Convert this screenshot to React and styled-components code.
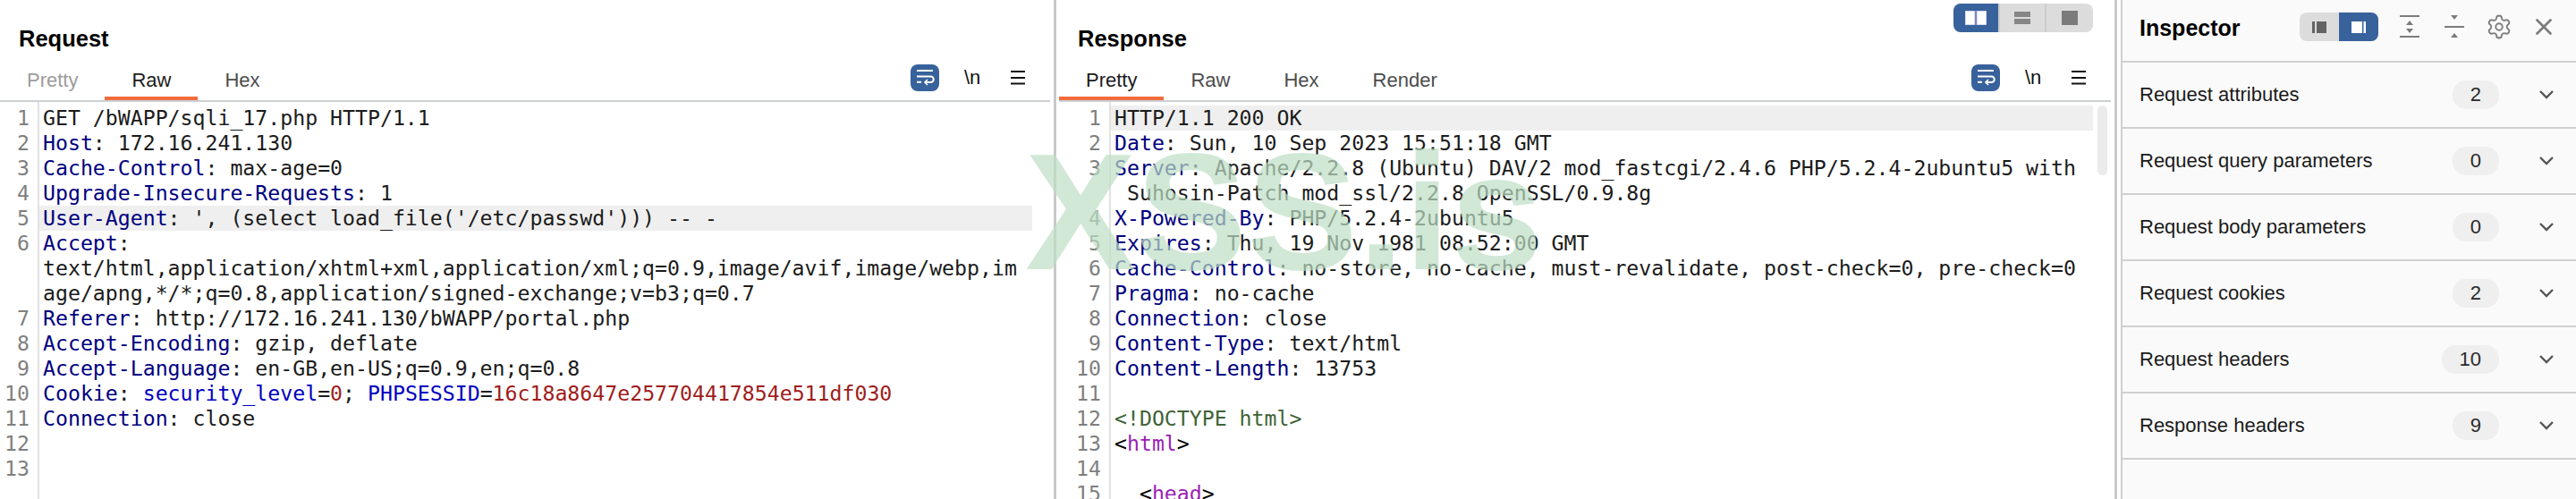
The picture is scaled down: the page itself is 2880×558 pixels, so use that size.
import styled, { createGlobalStyle } from "styled-components";
import { Settings, X } from "lucide-react";

const GlobalStyle = createGlobalStyle`
  html, body {
    margin: 0;
    background: #fff;
    font-family: "Liberation Sans", Arial, sans-serif;
  }
`;

const Page = styled.div`
  position: relative;
  display: flex;
  width: 2880px;
  height: 558px;
  overflow: hidden;
  background: #fff;
`;

const Panel = styled.section`
  width: ${(p) => p.$width}px;
  flex: none;
  display: flex;
  flex-direction: column;
  height: 100%;
`;

const Splitter = styled.div`
  width: ${(p) => p.$width}px;
  flex: none;
  display: flex;
  justify-content: center;
  &::before {
    content: "";
    width: 3px;
    background: #c9c9c9;
  }
`;

const TitleRow = styled.div`
  height: 72px;
  flex: none;
  display: flex;
  justify-content: space-between;
  align-items: flex-start;
  padding: 0 20px 0 21px;
  box-sizing: border-box;
`;

const Title = styled.h2`
  margin: 28px 0 0;
  font-size: 25.5px;
  line-height: 30px;
  font-weight: 700;
  color: #000;
`;

const LayoutSwitch = styled.div`
  display: flex;
  margin-top: 4px;
  height: 32px;
  border-radius: 8px;
  overflow: hidden;
  background: #dddcdc;
`;

const LayoutButton = styled.div`
  width: ${(p) => p.$width}px;
  display: flex;
  align-items: center;
  justify-content: center;
  background: ${(p) => (p.$active ? "#38629b" : "transparent")};
  border-left: ${(p) => (p.$divided ? "2px solid #cbcbcb" : "0")};
  box-sizing: border-box;
`;

const TabRow = styled.div`
  height: 42px;
  flex: none;
  display: flex;
  justify-content: space-between;
  align-items: flex-start;
  border-bottom: 2px solid #ccd0d4;
  box-sizing: border-box;
`;

const Tabs = styled.div`
  display: flex;
`;

const Tab = styled.div`
  height: 40px;
  padding: 0 30px;
  box-sizing: border-box;
  font-size: 22px;
  line-height: 36px;
  color: ${(p) => (p.$active ? "#1c1c1c" : p.$muted ? "#9c9c9c" : "#4c4c4c")};
  border-bottom: 4px solid ${(p) => (p.$active ? "#f26c3d" : "transparent")};
`;

const Tools = styled.div`
  display: flex;
  align-items: flex-start;
  padding-right: 28px;
`;

const WrapButton = styled.div`
  width: 32px;
  height: 30px;
  border-radius: 8px;
  background: #38629b;
  display: flex;
`;

const NewlineToggle = styled.div`
  width: 17px;
  margin: 0 35px 0 28px;
  font-size: 22px;
  line-height: 30px;
  color: #111;
`;

const MenuIcon = styled.svg`
  width: 16px;
  height: 30px;
`;

const Code = styled.div`
  position: relative;
  flex: 1;
  display: flex;
  min-height: 0;
  overflow: hidden;
  font-family: "DejaVu Sans Mono", Menlo, monospace;
  font-size: 23.2px;
  line-height: 28px;
`;

const Gutter = styled.div`
  width: ${(p) => p.$width}px;
  flex: none;
  padding: 4px 9px 0 0;
  box-sizing: content-box;
  border-right: 2px solid #e2e2e2;
  color: #7f7f7f;
  text-align: right;
  & > div {
    height: 28px;
  }
`;

const Lines = styled.div`
  flex: 1;
  min-width: 0;
  padding: 4px 20px 0 0;
`;

const Line = styled.div`
  height: 28px;
  padding-left: 4px;
  white-space: pre;
  color: #1b1b1b;
  background: ${(p) => (p.$current ? "#efefef" : "transparent")};
`;

const Key = styled.span`
  color: #000080;
`;

const CookieName = styled.span`
  color: #0000c0;
`;

const CookieValue = styled.span`
  color: #a01c1c;
`;

const Doctype = styled.span`
  color: #3f6337;
`;

const Tag = styled.span`
  color: #9a1fb5;
`;

const Bracket = styled.span`
  color: #000;
`;

const Scrollbar = styled.div`
  position: absolute;
  top: 4px;
  right: 4px;
  width: 11px;
  height: 78px;
  border-radius: 6px;
  background: #ebebeb;
`;

const Inspector = styled.aside`
  flex: 1;
  min-width: 0;
  height: 100%;
  background: #fafafa;
  border-left: 2px solid #cfcfcf;
  box-sizing: border-box;
`;

const InspectorHeader = styled.div`
  height: 70px;
  display: flex;
  align-items: flex-start;
  padding: 14px 11px 0 19px;
  box-sizing: border-box;
  border-bottom: 2px solid #d0d0d0;
`;

const InspectorTitle = styled.h2`
  margin: 0;
  flex: 1;
  font-size: 25px;
  line-height: 34px;
  font-weight: 700;
  color: #000;
`;

const SideSwitch = styled.div`
  display: flex;
  height: 32px;
  margin-right: 10px;
  border-radius: 8px;
  overflow: hidden;
  background: #dddcdc;
`;

const SideButton = styled.div`
  width: 44px;
  display: flex;
  align-items: center;
  justify-content: center;
  background: ${(p) => (p.$active ? "#38629b" : "transparent")};
`;

const HeaderIcon = styled.div`
  width: 50px;
  height: 32px;
  display: flex;
  align-items: center;
  justify-content: center;
  color: #7c7c7c;
`;

const Row = styled.div`
  height: 74px;
  display: flex;
  align-items: center;
  padding: 0 24px 0 19px;
  box-sizing: border-box;
  border-bottom: 2px solid #d0d0d0;
`;

const RowLabel = styled.span`
  flex: 1;
  font-size: 22px;
  color: #1a1a1a;
`;

const Badge = styled.span`
  height: 32px;
  padding: 0 20px;
  border-radius: 15px;
  background: #efefef;
  font-size: 22px;
  line-height: 32px;
  color: #2a2a2a;
`;

const Chevron = styled.svg`
  width: 18px;
  height: 12px;
  margin-left: 44px;
`;

const Watermark = styled.div`
  position: absolute;
  left: 1146px;
  top: 144px;
  font-size: 186px;
  line-height: 1;
  font-weight: 700;
  color: rgba(190, 222, 197, 0.7);
  white-space: nowrap;
  pointer-events: none;
`;

const WrapIcon = () => (
  <svg width="32" height="30" viewBox="0 0 32 30" fill="none" stroke="#fff" strokeWidth="2">
    <path d="M7 7h18" />
    <path d="M7 13.5h15.5a3.2 3.2 0 0 1 0 6.5H16" />
    <path d="M19 17l-3 3 3 3" strokeWidth="1.6" />
    <path d="M7 19.8h5" />
  </svg>
);

const Toolbar = () => (
  <Tools>
    <WrapButton>
      <WrapIcon />
    </WrapButton>
    <NewlineToggle>\n</NewlineToggle>
    <MenuIcon viewBox="0 0 16 30" fill="none" stroke="#111" strokeWidth="2">
      <path d="M0 8h16M0 15h16M0 21.5h16" />
    </MenuIcon>
  </Tools>
);

const Header = ({ k, children }) => (
  <>
    <Key>{k}</Key>: {children}
  </>
);

const requestNumbers = [1, 2, 3, 4, 5, 6, "", "", 7, 8, 9, 10, 11, 12, 13];

const responseNumbers = [1, 2, 3, "", 4, 5, 6, 7, 8, 9, 10, 11, 12, 13, 14, 15];

const rows = [
  ["Request attributes", 2],
  ["Request query parameters", 0],
  ["Request body parameters", 0],
  ["Request cookies", 2],
  ["Request headers", 10],
  ["Response headers", 9],
];

const App = () => (
  <Page>
    <GlobalStyle />

    <Panel $width={1174}>
      <TitleRow>
        <Title>Request</Title>
      </TitleRow>
      <TabRow>
        <Tabs>
          <Tab $muted>Pretty</Tab>
          <Tab $active>Raw</Tab>
          <Tab>Hex</Tab>
        </Tabs>
        <Toolbar />
      </TabRow>
      <Code>
        <Gutter $width={33}>
          {requestNumbers.map((n, i) => (
            <div key={i}>{n}</div>
          ))}
        </Gutter>
        <Lines>
          <Line>GET /bWAPP/sqli_17.php HTTP/1.1</Line>
          <Line><Header k="Host">172.16.241.130</Header></Line>
          <Line><Header k="Cache-Control">max-age=0</Header></Line>
          <Line><Header k="Upgrade-Insecure-Requests">1</Header></Line>
          <Line $current><Header k="User-Agent">', (select load_file('/etc/passwd'))) -- -</Header></Line>
          <Line><Key>Accept</Key>:</Line>
          <Line>text/html,application/xhtml+xml,application/xml;q=0.9,image/avif,image/webp,im</Line>
          <Line>age/apng,*/*;q=0.8,application/signed-exchange;v=b3;q=0.7</Line>
          <Line><Header k="Referer">http://172.16.241.130/bWAPP/portal.php</Header></Line>
          <Line><Header k="Accept-Encoding">gzip, deflate</Header></Line>
          <Line><Header k="Accept-Language">en-GB,en-US;q=0.9,en;q=0.8</Header></Line>
          <Line>
            <Header k="Cookie">
              <CookieName>security_level</CookieName>=<CookieValue>0</CookieValue>; <CookieName>PHPSESSID</CookieName>=<CookieValue>16c18a8647e257704417854e511df030</CookieValue>
            </Header>
          </Line>
          <Line><Header k="Connection">close</Header></Line>
        </Lines>
      </Code>
    </Panel>

    <Splitter $width={10} />

    <Panel $width={1176}>
      <TitleRow>
        <Title>Response</Title>
        <LayoutSwitch>
          <LayoutButton $active $width={50}>
            <svg width="24" height="16" viewBox="0 0 24 16">
              <path d="M0 0h11v16H0zM13 0h11v16H13z" fill="#fff" stroke="#b9b5dc" strokeWidth="1" />
            </svg>
          </LayoutButton>
          <LayoutButton $divided $width={52}>
            <svg width="18" height="14" viewBox="0 0 18 14" fill="#868686">
              <path d="M0 0h18v6H0zM0 8h18v6H0z" />
            </svg>
          </LayoutButton>
          <LayoutButton $divided $width={54}>
            <svg width="18" height="16" viewBox="0 0 18 16" fill="#7b7b7b">
              <path d="M0 0h18v16H0z" />
            </svg>
          </LayoutButton>
        </LayoutSwitch>
      </TitleRow>
      <TabRow>
        <Tabs>
          <Tab $active>Pretty</Tab>
          <Tab>Raw</Tab>
          <Tab>Hex</Tab>
          <Tab>Render</Tab>
        </Tabs>
        <Toolbar />
      </TabRow>
      <Code>
        <Gutter $width={47}>
          {responseNumbers.map((n, i) => (
            <div key={i}>{n}</div>
          ))}
        </Gutter>
        <Lines>
          <Line $current>HTTP/1.1 200 OK</Line>
          <Line><Header k="Date">Sun, 10 Sep 2023 15:51:18 GMT</Header></Line>
          <Line><Header k="Server">Apache/2.2.8 (Ubuntu) DAV/2 mod_fastcgi/2.4.6 PHP/5.2.4-2ubuntu5 with</Header></Line>
          <Line> Suhosin-Patch mod_ssl/2.2.8 OpenSSL/0.9.8g</Line>
          <Line><Header k="X-Powered-By">PHP/5.2.4-2ubuntu5</Header></Line>
          <Line><Header k="Expires">Thu, 19 Nov 1981 08:52:00 GMT</Header></Line>
          <Line><Header k="Cache-Control">no-store, no-cache, must-revalidate, post-check=0, pre-check=0</Header></Line>
          <Line><Header k="Pragma">no-cache</Header></Line>
          <Line><Header k="Connection">close</Header></Line>
          <Line><Header k="Content-Type">text/html</Header></Line>
          <Line><Header k="Content-Length">13753</Header></Line>
          <Line />
          <Line><Doctype>&lt;!DOCTYPE html&gt;</Doctype></Line>
          <Line><Bracket>&lt;</Bracket><Tag>html</Tag><Bracket>&gt;</Bracket></Line>
          <Line />
          <Line>  <Bracket>&lt;</Bracket><Tag>head</Tag><Bracket>&gt;</Bracket></Line>
        </Lines>
        <Scrollbar />
      </Code>
    </Panel>

    <Splitter $width={11} />

    <Inspector>
      <InspectorHeader>
        <InspectorTitle>Inspector</InspectorTitle>
        <SideSwitch>
          <SideButton>
            <svg width="16" height="13" viewBox="0 0 16 13" fill="#636363">
              <path d="M0 0h3v13H0zM5 0h11v13H5z" />
            </svg>
          </SideButton>
          <SideButton $active>
            <svg width="16" height="13" viewBox="0 0 16 13" fill="#fff">
              <path d="M0 0h12v13H0zM13.5 0H16v13h-2.5z" />
            </svg>
          </SideButton>
        </SideSwitch>
        <HeaderIcon>
          <svg width="22" height="26" viewBox="0 0 22 26" fill="#7c7c7c">
            <path d="M0 0h22v2H0zM0 23h22v2H0zM7 11l4-5 4 5zM7 15h8l-4 5z" />
          </svg>
        </HeaderIcon>
        <HeaderIcon>
          <svg width="22" height="26" viewBox="0 0 22 26" fill="#7c7c7c">
            <path d="M0 12h22v2H0zM7 0h8l-4 5zM7 25l4-5 4 5z" />
          </svg>
        </HeaderIcon>
        <HeaderIcon>
          <Settings size={30} strokeWidth={1.5} />
        </HeaderIcon>
        <HeaderIcon>
          <X size={30} strokeWidth={2.2} />
        </HeaderIcon>
      </InspectorHeader>
      {rows.map(([label, count]) => (
        <Row key={label}>
          <RowLabel>{label}</RowLabel>
          <Badge>{count}</Badge>
          <Chevron viewBox="0 0 18 12" fill="none" stroke="#555" strokeWidth="2.4">
            <path d="M2 2l7 7 7-7" />
          </Chevron>
        </Row>
      ))}
    </Inspector>

    <Watermark>XSS.is</Watermark>
  </Page>
);

export default App;
